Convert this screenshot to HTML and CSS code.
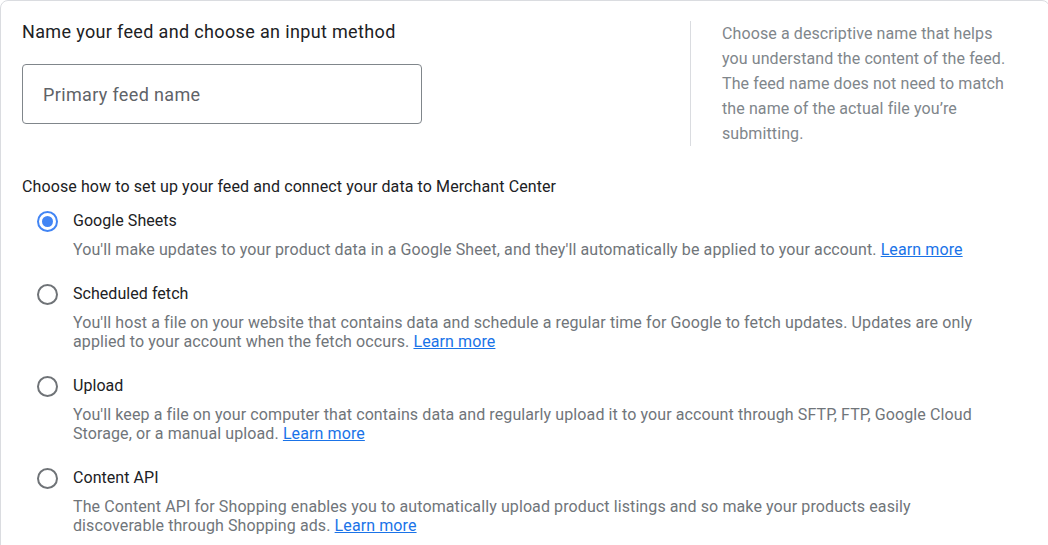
FILE: index.html
```html
<!DOCTYPE html>
<html>
<head>
<meta charset="utf-8">
<link rel="stylesheet" href="styles.css">
</head>
<body>
<div class="card">
  <div class="top">
    <div class="name-col">
      <h2 class="title">Name your feed and choose an input method</h2>
      <div class="field">Primary feed name</div>
    </div>
    <div class="help">Choose a descriptive name that helps you understand the content of the feed. The feed name does not need to match the name of the actual file you’re submitting.</div>
  </div>
  <div class="section-label">Choose how to set up your feed and connect your data to Merchant Center</div>
  <div class="options">
    <div class="option">
      <span class="radio checked"></span>
      <div class="opt-body">
        <div class="opt-label">Google Sheets</div>
        <div class="opt-desc">You'll make updates to your product data in a Google Sheet, and they'll automatically be applied to your account. <a href="#">Learn more</a></div>
      </div>
    </div>
    <div class="option">
      <span class="radio"></span>
      <div class="opt-body">
        <div class="opt-label">Scheduled fetch</div>
        <div class="opt-desc">You'll host a file on your website that contains data and schedule a regular time for Google to fetch updates. Updates are only applied to your account when the fetch occurs. <a href="#">Learn more</a></div>
      </div>
    </div>
    <div class="option">
      <span class="radio"></span>
      <div class="opt-body">
        <div class="opt-label">Upload</div>
        <div class="opt-desc">You'll keep a file on your computer that contains data and regularly upload it to your account through SFTP, FTP, Google Cloud Storage, or a manual upload. <a href="#">Learn more</a></div>
      </div>
    </div>
    <div class="option">
      <span class="radio"></span>
      <div class="opt-body">
        <div class="opt-label">Content API</div>
        <div class="opt-desc">The Content API for Shopping enables you to automatically upload product listings and so make your products easily discoverable through Shopping ads. <a href="#">Learn more</a></div>
      </div>
    </div>
  </div>
</div>
</body>
</html>
```

FILE: styles.css
```css
html, body {
  margin: 0;
  padding: 0;
  background: #ffffff;
  overflow: hidden;
}
body {
  font-family: Roboto, "Liberation Sans", sans-serif;
  color: #202124;
  width: 1048px;
  height: 545px;
}
.card {
  box-sizing: border-box;
  width: 1050px;
  height: 600px;
  border: 1px solid #dadce0;
  border-radius: 8px;
  padding: 19px 0 0 21px;
}
.top {
  display: flex;
  align-items: flex-start;
}
.name-col {
  width: 668px;
}
.title {
  margin: 0 0 20px 0;
  font-size: 18px;
  font-weight: 400;
  line-height: 24px;
  letter-spacing: 0.35px;
  color: #202124;
}
.field {
  box-sizing: border-box;
  width: 400px;
  height: 60px;
  border: 1px solid #80868b;
  border-radius: 4px;
  padding-left: 20px;
  display: flex;
  align-items: center;
  font-size: 18px;
  letter-spacing: 0.35px;
  color: #5f6368;
}
.help {
  margin-top: 1px;
  width: 290px;
  border-left: 1px solid #dadce0;
  padding-left: 31px;
  font-size: 16px;
  line-height: 25px;
  letter-spacing: 0.1px;
  color: #80868b;
}
.section-label {
  margin-top: 31px;
  font-size: 16px;
  line-height: 20px;
  letter-spacing: 0.1px;
  color: #202124;
}
.options {
  margin-top: 12px;
  display: flex;
  flex-direction: column;
  gap: 23px;
}
.option {
  display: flex;
  align-items: flex-start;
  padding-left: 15px;
}
.radio {
  box-sizing: border-box;
  flex: none;
  width: 21px;
  height: 21px;
  margin-top: 2px;
  margin-right: 15px;
  border: 2px solid #6f7377;
  border-radius: 50%;
  display: flex;
  align-items: center;
  justify-content: center;
}
.radio.checked {
  border-color: #4285f4;
}
.radio.checked::after {
  content: "";
  width: 11px;
  height: 11px;
  border-radius: 50%;
  background: #4285f4;
}
.opt-body {
  width: 920px;
}
.opt-label {
  font-size: 16px;
  line-height: 24px;
  letter-spacing: 0.05px;
  color: #202124;
}
.opt-desc {
  margin-top: 7px;
  font-size: 16px;
  line-height: 19px;
  letter-spacing: 0.1px;
  color: #70757a;
}
.opt-desc a {
  color: #1a73e8;
  text-decoration: underline;
}
```
